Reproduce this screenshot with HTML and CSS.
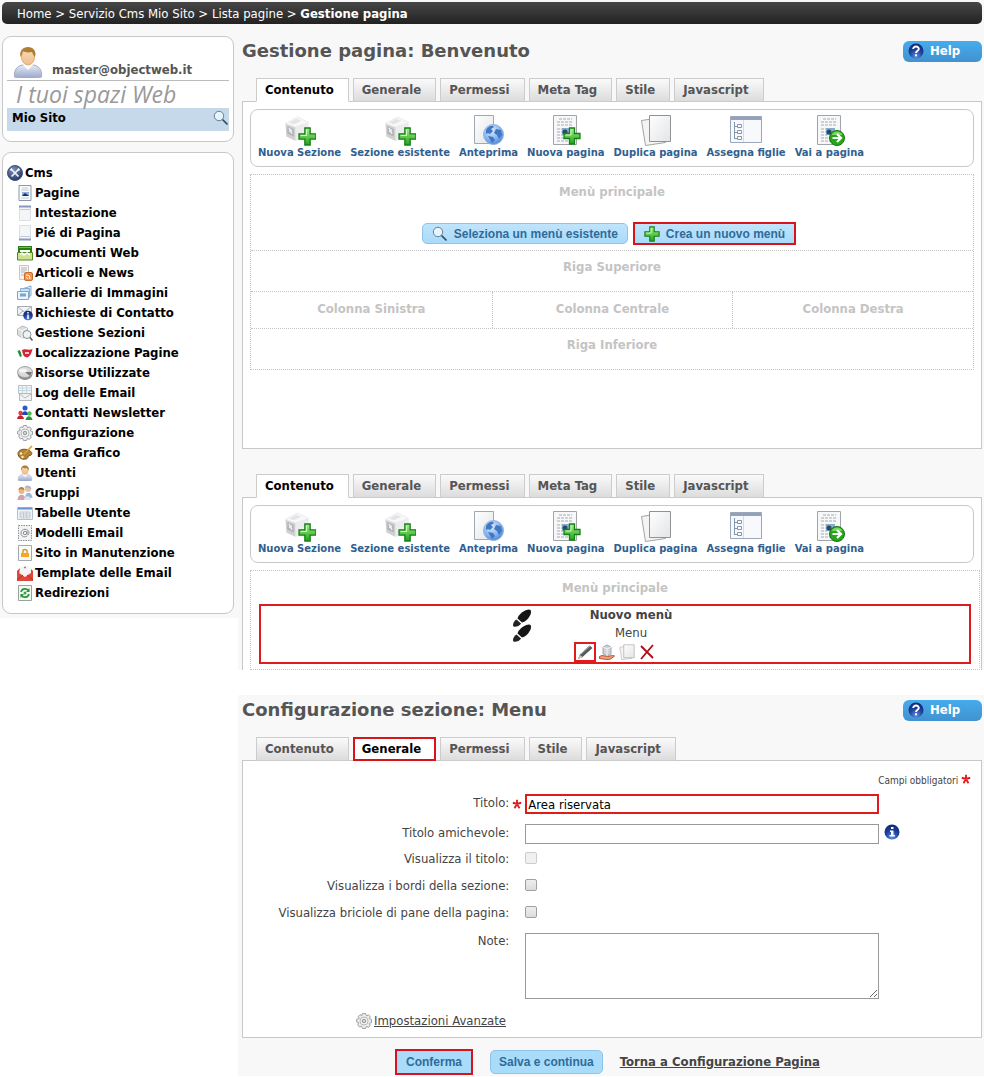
FILE: index.html
```html
<!DOCTYPE html>
<html lang="it">
<head>
<meta charset="utf-8">
<title>Gestione pagina</title>
<link rel="stylesheet" href="styles.css">
</head>
<body>
<svg class="defs" aria-hidden="true">
  <defs>
    <linearGradient id="g-skin" x1="0" y1="0" x2="0" y2="1"><stop offset="0" stop-color="#f9dcb8"/><stop offset="1" stop-color="#eebd8a"/></linearGradient>
    <linearGradient id="g-shirt" x1="0" y1="0" x2="0" y2="1"><stop offset="0" stop-color="#e6eaf6"/><stop offset="1" stop-color="#98a5ca"/></linearGradient>
    <radialGradient id="g-blue" cx=".5" cy=".85" r=".9"><stop offset="0" stop-color="#5e8fe0"/><stop offset=".5" stop-color="#1d3f9c"/><stop offset="1" stop-color="#10236b"/></radialGradient>
    <radialGradient id="g-navy" cx=".4" cy=".3" r=".8"><stop offset="0" stop-color="#7e93bd"/><stop offset="1" stop-color="#1b2c58"/></radialGradient>
    <radialGradient id="g-globe" cx=".4" cy=".3" r=".8"><stop offset="0" stop-color="#dcecff"/><stop offset=".6" stop-color="#7fb0ee"/><stop offset="1" stop-color="#4578c8"/></radialGradient>
    <linearGradient id="g-green" x1="0" y1="0" x2="0" y2="1"><stop offset="0" stop-color="#a6ef84"/><stop offset="1" stop-color="#1fa51b"/></linearGradient>
    <linearGradient id="g-paper" x1="0" y1="0" x2="1" y2="1"><stop offset="0" stop-color="#fff"/><stop offset="1" stop-color="#e2e4e6"/></linearGradient>
    <symbol id="plus" viewBox="0 0 18 18"><path d="M6.500 1h5v5.500H17v5h-5.500V17h-5v-5.500H1v-5h5.500z" fill="url(#g-green)" stroke="#17801a" stroke-width="1.300"/><path d="M8 2.500v5.500H2.500" fill="none" stroke="#d2fabf"/></symbol>
    <symbol id="cube" viewBox="0 0 28 28"><path d="M1 8 12 12v15L2 22z" fill="#d0d0d2"/><path d="M12 12 26 7v15l-14 5z" fill="#ececee"/><path d="M1 8 14 1l12 6-14 5z" fill="#f8f8f9" stroke="#e8e8ea"/><path d="m3 11 7 3v8l-7-3z" fill="#b4b4b7"/><path d="m5 13 3 6m0-4-3 2" stroke="#f4f4f4" stroke-width="1.500" fill="none"/><path d="m5 7 8-4 5 2-8 4z" fill="#e4e4e6"/></symbol>
    <symbol id="doc" viewBox="0 0 24 30"><path d="M.5.500h23v29H.5z" fill="#f6f7f8" stroke="#a2a5a8"/><path d="M6 4h13M4 7h16M4 10h15M4 14h5M4 17h5M4 20h6M4 23h12M4 26h12" stroke="#c2c5c8" stroke-width="1.400" stroke-dasharray="3 1"/><path d="M9 13h9v7H9z" fill="#86acc8"/><circle cx="12" cy="17" r="2.500" fill="#254a6c"/></symbol>
    <symbol id="new-section" viewBox="0 0 32 32"><use href="#cube" x="0" y="2" width="27" height="26"/><use href="#plus" x="14" y="13" width="19" height="19"/></symbol>
    <symbol id="preview" viewBox="0 0 32 32"><path d="M1.500 1.500h19v28h-19z" fill="url(#g-paper)" stroke="#a0a8b4"/><circle cx="20.500" cy="20.500" r="10" fill="url(#g-globe)" stroke="#8fb2e3"/><path d="M13 16c3-5 7-5 8-3l-3 2 2 2-3 3-2-1-2 1zm10-1 5 1 1 5-3 4-2-4-3-2zm-8 7 5 1 2 3-3 3z" fill="#4078c2"/></symbol>
    <symbol id="new-page" viewBox="0 0 32 32"><use href="#doc" x="3" y="1" width="24" height="30"/><use href="#plus" x="13" y="13" width="18" height="18"/></symbol>
    <symbol id="copy" viewBox="0 0 32 32"><path d="m1.500 6.500 20-3 4 25-20 3z" fill="#f4f4f4" stroke="#a5a5a5"/><path d="M9.500 1.500h21v26h-21z" fill="url(#g-paper)" stroke="#929292"/></symbol>
    <symbol id="assign" viewBox="0 0 32 32"><path d="M.5 2.500h31v26H.5z" fill="#f7f9fd" stroke="#9aa6ba"/><path d="M1 3h30v3H1z" fill="#93a1bd"/><path d="M13.500 6v22" stroke="#d5dce8"/><path d="M4.500 8v17M4.500 12.500H8M4.500 18.500H8M4.500 24.500H8" stroke="#8797ab"/><path d="M7.500 10.500h4v3h-4zm0 6h4v3h-4zm0 6h4v3h-4z" fill="#fff" stroke="#8797ab"/></symbol>
    <symbol id="goto" viewBox="0 0 32 32"><use href="#doc" x="4" y="1" width="24" height="30"/><circle cx="24" cy="24" r="7.500" fill="#27a51b" stroke="#137414"/><path d="M18.500 21a6 6 0 0 1 11 0" fill="#74d95c"/><path d="M19.500 24h8m-3.500-4 4 4-4 4" fill="none" stroke="#fff" stroke-width="2.200"/></symbol>
    <symbol id="person" viewBox="0 0 32 32"><path d="M2.500 31c-1-8 4-12 9-12h9c6 0 10 5 9 12-8 2-19 2-27 0z" fill="url(#g-shirt)" stroke="#a3adca"/><path d="m11 19 5 5 5-5-2-3h-6z" fill="#fff"/><ellipse cx="16" cy="11" rx="6.500" ry="8" fill="url(#g-skin)" stroke="#dcae78"/><path d="M8.500 11C7 5 11 1 16 1s9 4 7 10c-2-2-2-3-3-5-4 1-8 0-9-1-1 2-1 4-2.500 6z" fill="#b07d33"/></symbol>
    <symbol id="lens" viewBox="0 0 16 16"><circle cx="6" cy="6" r="4.700" fill="#e5f3fc" stroke="#667f94"/><path d="m9.500 9.500 5 5" stroke="#32495e" stroke-width="1.700"/><path d="M3.500 5.500C4 4 5 3.500 6 3.500" stroke="#fff" fill="none"/></symbol>
    <symbol id="help" viewBox="0 0 16 16"><circle cx="8" cy="8" r="7.500" fill="url(#g-blue)"/><path d="M5.200 6C5 2.800 11 2.700 10.800 6c0 1.800-2.800 1.800-2.800 4M8 11.300v2" fill="none" stroke="#fff" stroke-width="1.900"/></symbol>
    <symbol id="info" viewBox="0 0 16 16"><circle cx="8" cy="8" r="7.500" fill="url(#g-blue)"/><path d="M7 3h2.500v2H7zM6 6.500h3.500V11H11v1.500H5.500V11H7V8H6z" fill="#fff"/></symbol>
    <symbol id="tools" viewBox="0 0 16 16"><circle cx="8" cy="8" r="7.500" fill="url(#g-navy)" stroke="#42547c"/><path d="m4.500 4.500 7 7m0-7-7 7" stroke="#f0f3fa" stroke-width="1.700"/><path d="M3.500 5.500 5 3.500M11 3.500l1.500 2" stroke="#fff" stroke-width="1.500"/></symbol>
    <symbol id="page-pic" viewBox="0 0 16 16"><path d="M2 .5h12v15H2z" fill="#f7f9fb" stroke="#8c99a8"/><path d="M5 3h6M4 5h8M4 13h8" stroke="#c3ccd6"/><path d="M5 7h7v4H5z" fill="#8db0dc"/><path d="m5 11 3-3 4 3z" fill="#173066"/></symbol>
    <symbol id="page-head" viewBox="0 0 16 16"><path d="M2.500 1.500h11v14h-11z" fill="#f4f5f7" stroke="#dbdee4"/><path d="M2 1.500h12" stroke="#8c98bd" stroke-width="2"/><path d="M3 4.500h10" stroke="#c4cad8"/></symbol>
    <symbol id="page-foot" viewBox="0 0 16 16"><path d="M2.500.5h11v14h-11z" fill="#f4f5f7" stroke="#dbdee4"/><path d="M2 14.500h12" stroke="#8c98bd" stroke-width="2"/><path d="M3 11.500h10" stroke="#c4cad8"/></symbol>
    <symbol id="docs" viewBox="0 0 16 16"><path d="M1 1h14v6H1z" fill="#258010"/><path d="M2 2.500h12" stroke="#6dc34a"/><path d="M3 5h10v4H3z" fill="#fff"/><path d="M.5 7.500h15V15H.5z" fill="#cfe08e" stroke="#4f8a22"/><path d="M3 9.500 5 8l2 2 3-2 3 2" fill="none" stroke="#fff" stroke-width="1.500"/></symbol>
    <symbol id="news" viewBox="0 0 16 16"><path d="M2.500.5h9v14h-9z" fill="#f4f4f4" stroke="#c6c6c6"/><path d="M4 3h6M4 5h6M4 7h4M4 10h3" stroke="#b4b4b4"/><rect x="7.500" y="7.500" width="8" height="8" rx="1.500" fill="#f09250" stroke="#d36a27"/><path d="M9 10c3 0 4 1 4 4M9 12.500c1 0 1.500.5 1.500 1.500" fill="none" stroke="#fff"/></symbol>
    <symbol id="gallery" viewBox="0 0 16 16"><path d="M6.500 3.500 14 .8v10l-3 1" fill="#dcecf8" stroke="#8aadcc"/><path d="M3.500 3.500h9v9h-9z" fill="#c5ddf3" stroke="#87afd5"/><path d="M.5 6.500h11v8H.5z" fill="#e9f4fd" stroke="#7fa6cf"/><path d="M3 8.500h6v3H3z" fill="#7aa5d2"/></symbol>
    <symbol id="contact" viewBox="0 0 16 16"><path d="M.5 1.500h14v9H.5z" fill="#f2f4f7" stroke="#a5adb8"/><path d="m1 2 6.500 5L14 2M1 10l5-4" fill="none" stroke="#a5adb8"/><circle cx="11" cy="10.500" r="4.800" fill="url(#g-blue)"/><path d="M11 7v1.500M11 9.500V14" stroke="#fff" stroke-width="1.500"/></symbol>
    <symbol id="sections" viewBox="0 0 16 16"><path d="m.5 4 5-3 5 2v7l-5 3-5-3z" fill="#dcdcdd" stroke="#b7b7b9"/><path d="m1 4 4 2 5-3M5 6v7" stroke="#fafafa" fill="none"/><circle cx="10" cy="9.500" r="4" fill="#edf3f5" stroke="#8b9498"/><path d="m13 12.500 2.500 3" stroke="#555" stroke-width="1.500"/></symbol>
    <symbol id="locale" viewBox="0 0 16 16"><path d="M.5 6 3 5l2 6-2 1z" fill="#268a38"/><path d="M3.500 5.500 5 5l1 5-1 1z" fill="#f5f5f5"/><path d="M5 5c3-2 7 1 10.500-1-1 4-2 7-5 8.500C8 12 6 12 5 5z" fill="#d72433"/><path d="M8 8h4" stroke="#ffc0c0" stroke-width="2"/></symbol>
    <symbol id="disk" viewBox="0 0 16 16"><ellipse cx="8" cy="9" rx="7.500" ry="6" fill="#8b8b8d"/><ellipse cx="8" cy="7" rx="7.500" ry="5.500" fill="#d9dadb" stroke="#a4a4a6"/><path d="M8 7h7l-2 4z" fill="#777"/><ellipse cx="6" cy="5.500" rx="4" ry="2" fill="#f4f4f4"/></symbol>
    <symbol id="log" viewBox="0 0 16 16"><path d="M1.500.5h13v8h-13z" fill="#eff6f8" stroke="#b5c5cf"/><path d="M2 3h12M2 5.500h12M5.500 1v7M9.500 1v7" stroke="#c8d7df"/><path d="M2.500 8.500h12v7h-12z" fill="#f1f1f1" stroke="#b8b8b8"/><path d="m3 9 5 4 6-4" fill="none" stroke="#bbb"/></symbol>
    <symbol id="newsletter" viewBox="0 0 16 16"><circle cx="8" cy="3" r="2.500" fill="#3157c7"/><path d="M4.500 10C5 5 11 5 11.500 10z" fill="#2346b4"/><circle cx="3.500" cy="8" r="2.200" fill="#dc4242"/><path d="M0 14c1-5 6-5 7 0z" fill="#c71f29"/><circle cx="12.500" cy="8.500" r="2.200" fill="#52bd4c"/><path d="M8.500 15c1-5 6-5 7 0z" fill="#279631"/></symbol>
    <symbol id="gear" viewBox="0 0 16 16"><path d="m6.500.5-.5 2-2-.8-1.700 1.700.8 2-2.500 1v2.500l2 .6-.8 2.300L3.500 14l2-.8 1 2.300h3l.7-2 2.300.8 1.700-1.800-.8-2 2.100-1V6.500l-2-.7.8-2.200L12.500 2l-2 .8-.9-2.300z" fill="#ececed" stroke="#9d9fa3"/><circle cx="8" cy="8" r="4" fill="#f9f9f9" stroke="#b7b8bb"/><circle cx="8" cy="8" r="1.800" fill="#d1d2d4" stroke="#929498"/></symbol>
    <symbol id="palette" viewBox="0 0 16 16"><path d="M1 9c0-4 5-6 10-4 3 1 5 3 3 5-1 1-3 0-3 2 0 3-9 4-10-3z" fill="#b28439" stroke="#7c551a"/><circle cx="4" cy="8.500" r="1.200" fill="#fff0c5"/><circle cx="5.500" cy="12" r="1.200" fill="#fff0c5"/><path d="m7 9 8-8" stroke="#d9a22a" stroke-width="1.700"/></symbol>
    <symbol id="group" viewBox="0 0 16 16"><circle cx="11" cy="4" r="3" fill="#eac19a"/><path d="M7.500 3c1-4 6-3 7 1-3-1-4-2-7-1zM8 13c0-7 7-7 7.500 0z" fill="#9db7dc"/><circle cx="4.500" cy="6" r="3" fill="#e9b784"/><path d="M1.500 5c0-4 6-4 6 0-3-1-4-1-6 0z" fill="#bc7f34"/><path d="M.5 15c0-7 8-7 8 0z" fill="#d4a1b0"/><path d="M7 15c0-5 7-5 7 0z" fill="#d9e3f3"/></symbol>
    <symbol id="table" viewBox="0 0 16 16"><path d="M.5 2.500h15v12H.5z" fill="#f1f4f8" stroke="#b7c1cd"/><path d="M1 3.500h14" stroke="#6a95d0" stroke-width="2"/><path d="M3 7h10v6H3zM3 9h10M3 11h10M6.500 7v6M9.500 7v6" stroke="#c2cbd3" fill="none"/></symbol>
    <symbol id="model" viewBox="0 0 16 16"><path d="M1.500.5h13v15h-13z" fill="#f2f3f4" stroke="#8c8f92" stroke-dasharray="1.500 1"/><circle cx="8" cy="8" r="1.700" fill="none" stroke="#8b8e91"/><path d="M10 6v3c1 2 2 0 2-1 0-5-8-5-8 0 0 4 4 4.500 6 3" fill="none" stroke="#8b8e91"/></symbol>
    <symbol id="lock" viewBox="0 0 16 16"><path d="M1.500.5h13v15h-13z" fill="#f8f9f9" stroke="#a4a9ad"/><path d="M6 8V6c0-2 4-2 4 0v2" fill="none" stroke="#dc961f" stroke-width="1.400"/><path d="M4 8h8v4H4z" fill="#f4a923"/></symbol>
    <symbol id="template" viewBox="0 0 16 16"><path d="M0 6 3 3h10l3 3v3H0z" fill="#cf4b42"/><path d="M3 2 10 .5 14 3v8H2z" fill="#f5f5f5"/><path d="M7 2.500h2" stroke="#d66" stroke-width="1.500"/><path d="M0 6.500 8 12l8-5.500V16H0z" fill="#df483d"/><path d="m0 15 6-5m10 5-6-5" stroke="#ba2e28"/></symbol>
    <symbol id="redirect" viewBox="0 0 16 16"><path d="M1.500.5h13v15h-13z" fill="#f5f8f5" stroke="#9aa29b"/><path d="M4 7c1-4 6-4 8-1M12 9c-1 4-6 4-8 1" fill="none" stroke="#2b9638" stroke-width="1.700"/><path d="M12.500 3v4H9zM3.500 13V9H7z" fill="#2b9638"/><circle cx="8" cy="8" r="1.500" fill="#31a441"/></symbol>
    <symbol id="foot" viewBox="0 0 20 18"><path d="M5.500 9.500C6.500 5 13 .5 17 .5c2.500 0 2.500 3 1 6-2 4-5 6.500-8 7z" fill="#161616"/><path d="m4.500 10.500 4.500 4c-1 2.500-6 4-7.500 3C0 16 2 12 4.500 10.500z" fill="#222"/></symbol>
    <symbol id="feet" viewBox="0 0 20 34"><use href="#foot" x="0" y="0" width="20" height="18"/><use href="#foot" x="0" y="15" width="20" height="18"/></symbol>
    <symbol id="pencil" viewBox="0 0 16 16"><path d="M1 15 3 10.500 12.500 1.500l3 2.500-10 9z" fill="#565b5e"/><path d="m4 10 9-8" stroke="#a6abae"/><path d="m1 15 2-4 2.500 2z" fill="#ddc9a5"/></symbol>
    <symbol id="hand-cube" viewBox="0 0 16 16"><path d="m4 3 4-2 4 2v7l-4 2-4-2z" fill="#cbd1d7" stroke="#a2a7ad"/><path d="m4 3 4 2 4-2M8 5v7" stroke="#f4f4f4" fill="none"/><path d="M.5 12.500c4-2 5 0 8 0l5-1 2 .5-4 3c-3 1-7 0-11-.5z" fill="#eba47a" stroke="#b94f32"/></symbol>
    <symbol id="delete" viewBox="0 0 16 16"><path d="m2 2 12 12M14 1 2 15" stroke="#ad1119" stroke-width="1.900"/></symbol>
    <symbol id="star" viewBox="0 0 12 12"><path d="M6 1v5M1 4.500 6 6l5-1.500M3 11l3-5 3 5" fill="none" stroke="#e21a1c" stroke-width="2.200"/></symbol>
  </defs>
</svg>

<nav class="crumbs"><a href="#">Home</a> &gt; <a href="#">Servizio Cms Mio Sito</a> &gt; <a href="#">Lista pagine</a> &gt; <b>Gestione pagina</b></nav>

<div class="layout">
  <aside class="sidebar">
    <section class="card account">
      <div class="user"><svg class="i32"><use href="#person"/></svg><b>master@objectweb.it</b></div>
      <h2 class="spaces">I tuoi spazi Web</h2>
      <a class="site" href="#">Mio Sito<svg class="i16"><use href="#lens"/></svg></a>
    </section>
    <nav class="card menu">
      <a href="#" class="root"><svg class="i16"><use href="#tools"/></svg>Cms</a>
      <a href="#"><svg class="i16"><use href="#page-pic"/></svg>Pagine</a>
      <a href="#"><svg class="i16"><use href="#page-head"/></svg>Intestazione</a>
      <a href="#"><svg class="i16"><use href="#page-foot"/></svg>Pié di Pagina</a>
      <a href="#"><svg class="i16"><use href="#docs"/></svg>Documenti Web</a>
      <a href="#"><svg class="i16"><use href="#news"/></svg>Articoli e News</a>
      <a href="#"><svg class="i16"><use href="#gallery"/></svg>Gallerie di Immagini</a>
      <a href="#"><svg class="i16"><use href="#contact"/></svg>Richieste di Contatto</a>
      <a href="#"><svg class="i16"><use href="#sections"/></svg>Gestione Sezioni</a>
      <a href="#"><svg class="i16"><use href="#locale"/></svg>Localizzazione Pagine</a>
      <a href="#"><svg class="i16"><use href="#disk"/></svg>Risorse Utilizzate</a>
      <a href="#"><svg class="i16"><use href="#log"/></svg>Log delle Email</a>
      <a href="#"><svg class="i16"><use href="#newsletter"/></svg>Contatti Newsletter</a>
      <a href="#"><svg class="i16"><use href="#gear"/></svg>Configurazione</a>
      <a href="#"><svg class="i16"><use href="#palette"/></svg>Tema Grafico</a>
      <a href="#"><svg class="i16"><use href="#person"/></svg>Utenti</a>
      <a href="#"><svg class="i16"><use href="#group"/></svg>Gruppi</a>
      <a href="#"><svg class="i16"><use href="#table"/></svg>Tabelle Utente</a>
      <a href="#"><svg class="i16"><use href="#model"/></svg>Modelli Email</a>
      <a href="#"><svg class="i16"><use href="#lock"/></svg>Sito in Manutenzione</a>
      <a href="#"><svg class="i16"><use href="#template"/></svg>Template delle Email</a>
      <a href="#"><svg class="i16"><use href="#redirect"/></svg>Redirezioni</a>
    </nav>
  </aside>

  <main class="main">
    <section class="block page-block">
      <header class="heading"><h1>Gestione pagina: Benvenuto</h1><a class="help" href="#"><svg class="i16"><use href="#help"/></svg>Help</a></header>
      <nav class="tabs"><a class="on" href="#">Contenuto</a><a href="#">Generale</a><a href="#">Permessi</a><a href="#">Meta Tag</a><a href="#">Stile</a><a href="#">Javascript</a></nav>
      <div class="panel panel-tall">
        <div class="toolbar">
          <a href="#"><svg class="i32"><use href="#new-section"/></svg>Nuova Sezione</a>
          <a href="#"><svg class="i32"><use href="#new-section"/></svg>Sezione esistente</a>
          <a href="#"><svg class="i32"><use href="#preview"/></svg>Anteprima</a>
          <a href="#"><svg class="i32"><use href="#new-page"/></svg>Nuova pagina</a>
          <a href="#"><svg class="i32"><use href="#copy"/></svg>Duplica pagina</a>
          <a href="#"><svg class="i32"><use href="#assign"/></svg>Assegna figlie</a>
          <a href="#"><svg class="i32"><use href="#goto"/></svg>Vai a pagina</a>
        </div>
        <div class="zones">
          <div class="zone">Menù principale
            <div class="zone-actions">
              <button class="btn small" type="button"><svg class="i16"><use href="#lens"/></svg>Seleziona un menù esistente</button>
              <button class="btn small marked" type="button"><svg class="i16"><use href="#plus"/></svg>Crea un nuovo menù</button>
            </div>
          </div>
          <div class="zone row">Riga Superiore</div>
          <div class="columns"><div>Colonna Sinistra</div><div>Colonna Centrale</div><div>Colonna Destra</div></div>
          <div class="zone row">Riga Inferiore</div>
        </div>
      </div>
    </section>

    <section class="block menu-block">
      <nav class="tabs"><a class="on" href="#">Contenuto</a><a href="#">Generale</a><a href="#">Permessi</a><a href="#">Meta Tag</a><a href="#">Stile</a><a href="#">Javascript</a></nav>
      <div class="panel panel-open">
        <div class="toolbar">
          <a href="#"><svg class="i32"><use href="#new-section"/></svg>Nuova Sezione</a>
          <a href="#"><svg class="i32"><use href="#new-section"/></svg>Sezione esistente</a>
          <a href="#"><svg class="i32"><use href="#preview"/></svg>Anteprima</a>
          <a href="#"><svg class="i32"><use href="#new-page"/></svg>Nuova pagina</a>
          <a href="#"><svg class="i32"><use href="#copy"/></svg>Duplica pagina</a>
          <a href="#"><svg class="i32"><use href="#assign"/></svg>Assegna figlie</a>
          <a href="#"><svg class="i32"><use href="#goto"/></svg>Vai a pagina</a>
        </div>
        <div class="menu-zone">Menù principale
          <div class="item">
            <svg class="feet"><use href="#feet"/></svg>
            <div class="item-body"><b>Nuovo menù</b><span>Menu</span>
              <div class="item-tools">
                <button type="button" class="marked" aria-label="Modifica"><svg class="i16"><use href="#pencil"/></svg></button>
                <button type="button" aria-label="Sposta"><svg class="i16"><use href="#hand-cube"/></svg></button>
                <button type="button" aria-label="Duplica"><svg class="i16"><use href="#copy"/></svg></button>
                <button type="button" aria-label="Elimina"><svg class="i16"><use href="#delete"/></svg></button>
              </div>
            </div>
          </div>
        </div>
      </div>
    </section>

    <section class="block config-block">
      <header class="heading"><h1>Configurazione sezione: Menu</h1><a class="help" href="#"><svg class="i16"><use href="#help"/></svg>Help</a></header>
      <nav class="tabs"><a href="#">Contenuto</a><a class="on marked" href="#">Generale</a><a href="#">Permessi</a><a href="#">Stile</a><a href="#">Javascript</a></nav>
      <form class="form">
        <div class="panel fields">
          <p class="required">Campi obbligatori <svg class="i10"><use href="#star"/></svg></p>
          <div class="field"><label for="t">Titolo:</label><svg class="i10"><use href="#star"/></svg><input class="marked" id="t" type="text" value="Area riservata"></div>
          <div class="field"><label for="ta">Titolo amichevole:</label><input id="ta" type="text"><svg class="i16"><use href="#info"/></svg></div>
          <div class="field check"><label for="vt">Visualizza il titolo:</label><input id="vt" type="checkbox" disabled></div>
          <div class="field check"><label for="vb">Visualizza i bordi della sezione:</label><input id="vb" type="checkbox"></div>
          <div class="field check"><label for="vp">Visualizza briciole di pane della pagina:</label><input id="vp" type="checkbox"></div>
          <div class="field"><label for="n">Note:</label><textarea id="n"></textarea></div>
          <a class="advanced" href="#"><svg class="i16"><use href="#gear"/></svg><span>Impostazioni Avanzate</span></a>
        </div>
        <div class="actions"><button class="btn marked" type="submit">Conferma</button><button class="btn" type="button">Salva e continua</button><a href="#">Torna a Configurazione Pagina</a></div>
      </form>
    </section>
  </main>
</div>
</body>
</html>
```
FILE: styles.css
```css
* { box-sizing: border-box; }
body { margin: 0; padding-top: 2px; background: linear-gradient(#f8f8f8, #f8f8f8) 0 0 / 100% 36px no-repeat #fff; color: #444; font: 13px/16px "DejaVu Sans Condensed", Tahoma, sans-serif; }
a { color: inherit; text-decoration: none; }
h1, h2, p { margin: 0; }
svg { flex: none; }
button { font: inherit; cursor: pointer; }
.defs { position: absolute; width: 0; height: 0; }
.i10 { width: 10px; height: 10px; }
.i16 { width: 16px; height: 16px; }
.i32 { width: 32px; height: 32px; }

.crumbs { margin: 0 2px; padding: 3px 15px 1px; line-height: 18px; color: #fff; border-radius: 5px; background: linear-gradient(#474747, #222); }

.layout { display: flex; align-items: flex-start; }
.sidebar { flex: none; width: 238px; padding: 12px 4px 4px 2px; background: #f8f8f8; }
.card { background: #fff; border: 1px solid #c8c8c8; border-radius: 9px; }
.account { padding: 9px 4px 10px; margin-bottom: 10px; }
.user { display: flex; align-items: flex-end; gap: 8px; padding: 0 0 2px 5px; border-bottom: 1px solid #bbb; color: #555; }
.spaces { padding-left: 9px; font: italic 23px/27px "Open Sans", sans-serif; color: #999; }
.site { display: flex; justify-content: space-between; height: 23px; padding: 2px 0 0 5px; background: #c5d9ea; color: #000; font-weight: bold; }
.menu { padding: 10px 4px; }
.menu a { display: flex; align-items: center; gap: 2px; height: 20px; padding-left: 10px; color: #000; font-weight: bold; white-space: nowrap; }
.menu .root { padding-left: 0; }

.main { flex: 1; min-width: 0; }
.block { background: #f8f8f8; padding: 0 2px 0 4px; }
.heading { display: flex; justify-content: space-between; align-items: center; height: 30px; margin-bottom: 12px; }
h1 { font: bold 18px/24px "DejaVu Sans", Verdana, sans-serif; color: #555; }
.help { display: flex; align-items: center; gap: 6px; width: 79px; height: 21px; padding: 0 5px; border-radius: 6px; background: linear-gradient(#46acec, #4192cf); color: #fff; font-weight: bold; }
.page-block { padding-top: 12px; }
.menu-block { padding-top: 25px; }
.config-block { margin-top: 25px; padding-bottom: 1px; }

.tabs { display: flex; gap: 4px; padding-left: 14px; height: 24px; margin-bottom: -1px; position: relative; }
.tabs a { height: 24px; padding: 3px 14px 0 8px; border: 1px solid #ccc; background: linear-gradient(#fafafa, #dcdcdc); color: #555; font-weight: bold; }
.tabs .on { background: #fff; color: #000; border-bottom-color: #fff; }
.tabs .marked { border: 2px solid #d8141a; padding: 2px 13px 0 7px; }
.panel { background: #fff; border: 1px solid #c8c8c8; padding: 7px; }
.panel-tall { padding-bottom: 78px; }
.panel-open { border-bottom: 0; padding: 7px 1px 0 7px; }
.toolbar { display: flex; flex-wrap: wrap; gap: 9px; min-height: 58px; padding: 4px 7px 7px; border: 1px solid #c8c8c8; border-radius: 8px; }
.toolbar a { display: flex; flex-direction: column; align-items: center; font: bold 10px/13px "DejaVu Sans", Verdana, sans-serif; color: #2f6090; }
.panel-open .toolbar { margin-right: 6px; }

.zones { margin-top: 7px; border: 1px dotted #c4c4c4; text-align: center; font-weight: bold; color: #c4c4c4; }
.zone { padding-top: 9px; }
.row { height: 41px; border-top: 1px dotted #c4c4c4; padding-top: 8px; }
.zone-actions { display: flex; justify-content: center; gap: 5px; padding: 22px 6px 5px 0; }
.columns { display: grid; grid-template-columns: repeat(3, 1fr); border-top: 1px dotted #c4c4c4; }
.columns div { padding: 9px 0 11px; }
.columns div + div { border-left: 1px dotted #c4c4c4; }

.btn { height: 24px; padding: 0 8px; border: 1px solid #90c3e8; border-radius: 5px; background: #a9dcfa; color: #2f6b99; font: bold 12px/14px "Liberation Sans", Arial, sans-serif; }
.btn.marked { height: 26px; padding: 0 9px; border: 2px solid #d8141a; border-radius: 0; }
.btn.small { display: flex; align-items: center; gap: 6px; height: 21px; margin: 1px 0; padding: 0 9px; background: linear-gradient(#c0e4fc, #a9dafa); }
.btn.small.marked { height: 23px; margin: 0; }

.menu-zone { margin-top: 7px; padding: 9px 8px 5px; border: 1px dotted #c4c4c4; text-align: center; font-weight: bold; color: #c4c4c4; }
.item { display: flex; justify-content: center; gap: 42px; margin-top: 8px; height: 60px; padding-right: 30px; border: 2px solid #e11b1b; color: #444; }
.feet { width: 20px; height: 34px; margin-top: 3px; }
.item-body { display: flex; flex-direction: column; align-items: center; width: 114px; line-height: 18px; }
.item-body span { font-weight: normal; }
.item-tools { display: flex; align-self: flex-start; gap: 2px; }
.item-tools button { display: grid; place-items: center; width: 18px; height: 20px; padding: 0; border: 0; background: none; }
.item-tools .marked { width: 22px; border: 2px solid #e11b1b; }

.fields { padding: 12px 0 8px 1px; }
.required { padding: 0 10px 5px; text-align: right; font-size: 10px; }
.field { display: flex; align-items: flex-start; gap: 0 3px; margin-bottom: 10px; }
.field label { width: 36%; text-align: right; padding-top: 1px; }
.field .i10 { margin: 5px 0 0; }
.field .i16 { margin-left: 2px; }
.field input, .field textarea { margin: 0; }
.field input[type=text] { width: 48%; height: 20px; border: 1px solid #999; padding: 1px; font: inherit; color: #000; background: #fff; }
.field label + input, .field label + textarea { margin-left: 13px; }
.field input[type=text].marked { border: 2px solid #e11b1b; }
.field textarea { width: 48%; height: 66px; margin-top: 1px; border: 1px solid #999; background: #fff; font: inherit; }
.field:has(+ .check) { margin-bottom: 7px; }
.field.check { margin-bottom: 11px; }
.check label { padding: 0; }
.check input { appearance: none; width: 12px; height: 12px; margin-top: 1px; border: 1px solid #a0a0a0; border-radius: 2px; background: linear-gradient(#eee, #dcdcdc); }
.check input:checked { background: #4192cf; }
.check input:disabled { border-color: #ccc; background: #f0f0f0; }
.advanced { display: flex; width: fit-content; gap: 2px; margin: 14px 0 0 112px; text-decoration: underline; }
.actions { display: flex; align-items: center; gap: 17px; padding: 11px 0 0 153px; }
.actions a { font-weight: bold; text-decoration: underline; }
```
